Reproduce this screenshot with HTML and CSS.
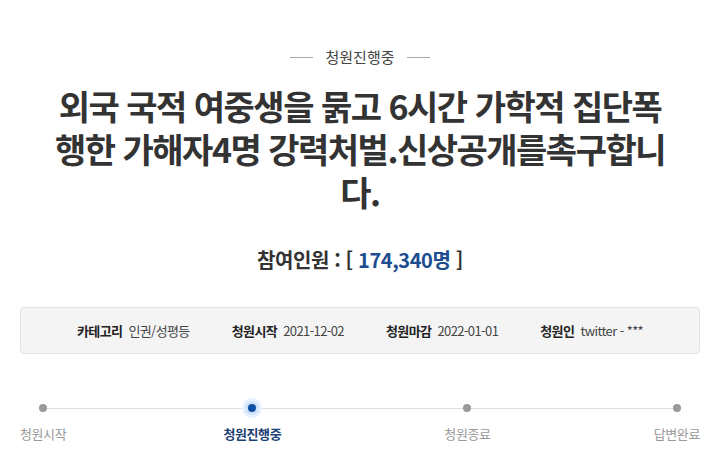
FILE: index.html
```html
<!DOCTYPE html>
<html lang="ko">
<head>
    <meta charset="UTF-8">
    <meta name="viewport" content="width=device-width, initial-scale=1.0">
    <title>청원진행중</title>
    <link rel="stylesheet" href="styles.css">
</head>
<body>
    <div class="petition">
        <div class="status-label"><span>청원진행중</span></div>
        <h1 class="title">외국 국적 여중생을 묽고 6시간 가학적 집단폭행한 가해자4명 강력처벌.신상공개를촉구합니다.</h1>
        <p class="count">참여인원 : [ <span class="count-num">174,340명</span> ]</p>

        <ul class="info">
            <li><strong>카테고리</strong> 인권/성평등</li>
            <li><strong>청원시작</strong> 2021-12-02</li>
            <li><strong>청원마감</strong> 2022-01-01</li>
            <li><strong>청원인</strong> twitter - ***</li>
        </ul>

        <ol class="steps">
            <li class="step">청원시작</li>
            <li class="step active">청원진행중</li>
            <li class="step">청원종료</li>
            <li class="step">답변완료</li>
        </ol>
    </div>
</body>
</html>
```

FILE: styles.css
```css
body {
    margin: 0;
    background: #fff;
    color: #333;
    font-family: "Noto Sans CJK KR", "Noto Sans", sans-serif;
}
.petition {
    padding: 44px 20px 0;
}
.status-label {
    display: flex;
    justify-content: center;
    align-items: center;
    gap: 12px;
    font-size: 15px;
    color: #444;
    line-height: 26px;
}
.status-label::before,
.status-label::after {
    content: "";
    width: 23px;
    height: 1px;
    background: #aaa;
}
.title {
    margin: 14px auto 0;
    max-width: 616px;
    text-align: center;
    font-size: 34px;
    font-weight: 700;
    letter-spacing: -1.5px;
    line-height: 43px;
    color: #333;
}
.count {
    margin: 32px 0 0;
    text-align: center;
    font-size: 20px;
    font-weight: 700;
    letter-spacing: -0.4px;
    color: #333;
}
.count-num {
    color: #1b4d8f;
}
.info {
    list-style: none;
    margin: 33px 0 0;
    padding: 0;
    height: 45px;
    display: flex;
    justify-content: center;
    align-items: center;
    gap: 42px;
    background: #f4f4f4;
    border: 1px solid #e3e3e3;
    border-radius: 4px;
    font-size: 13px;
    letter-spacing: -0.6px;
    color: #444;
}
.info strong {
    font-weight: 700;
    color: #222;
    margin-right: 3px;
}
.steps {
    list-style: none;
    margin: 46px 0 0;
    padding: 0;
    display: flex;
    justify-content: space-between;
    position: relative;
}
.steps::before {
    content: "";
    position: absolute;
    top: 8px;
    left: 22px;
    right: 26px;
    height: 1px;
    background: #ddd;
}
.step {
    display: flex;
    flex-direction: column;
    align-items: center;
    font-size: 13px;
    color: #999;
    letter-spacing: -0.4px;
}
.step::before {
    content: "";
    width: 8px;
    height: 8px;
    margin: 4px 0 12px;
    border-radius: 50%;
    background: #999;
    position: relative;
}
.step.active {
    color: #1c3f73;
    font-weight: 700;
    margin-left: -6px;
}
.step.active::before {
    background: #0b4ea2;
    box-shadow: 0 0 0 3px #cfe2fa, 0 0 0 6px #e8f2fe;
}
```
